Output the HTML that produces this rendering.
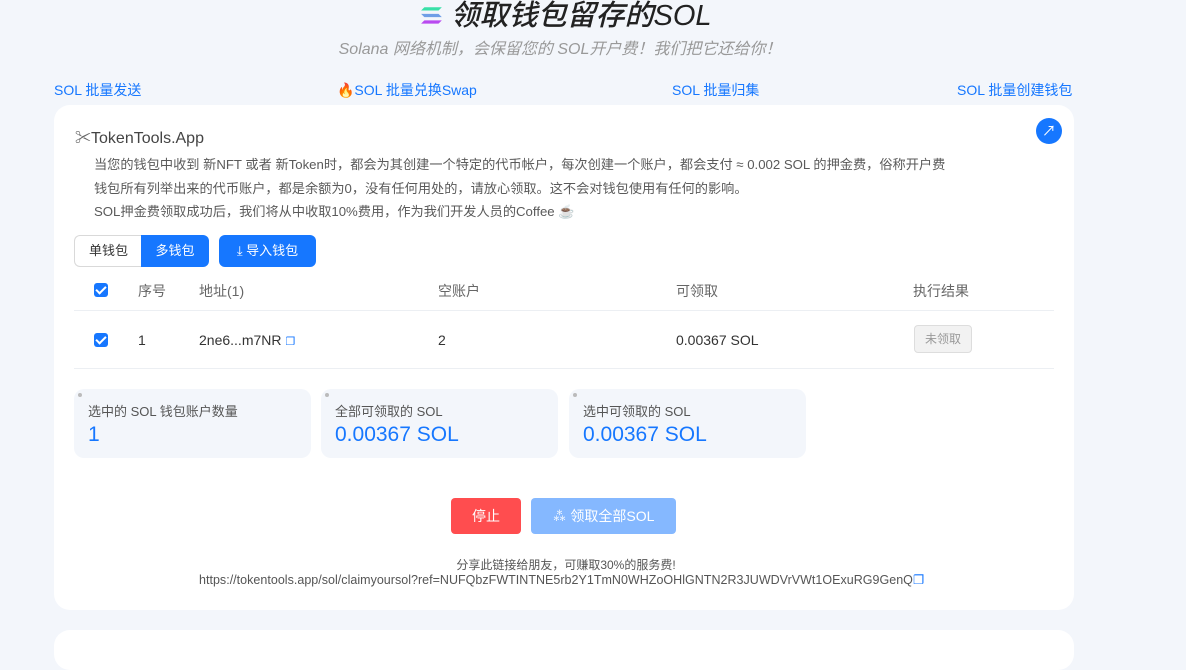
<!DOCTYPE html>
<html><head><meta charset="utf-8"><style>
*{box-sizing:border-box;margin:0;padding:0}
body{width:1186px;height:644px;overflow:hidden;background:#f3f6fb;font-family:"Liberation Sans","Noto Sans CJK SC",sans-serif;position:relative;color:#333}
.abs{position:absolute;white-space:nowrap}
.title{left:0;width:1132px;text-align:center;top:-8px;font-size:29px;font-weight:500;font-style:italic;color:#222}
.sub{left:0;width:1120px;text-align:center;top:35px;font-size:16px;font-style:italic;color:#999}
.link{top:80px;font-size:14px;color:#1677ff}
.card{left:54px;top:105px;width:1020px;height:505px;background:#fff;border-radius:16px}
.card2{left:54px;top:630px;width:1020px;height:40px;background:#fff;border-radius:16px}
.p{font-size:13.2px;color:#5a5a5a}
.cb{width:14px;height:14px;background:#1677ff;border-radius:3px}
.cb:after{content:"";position:absolute;left:4px;top:1px;width:4px;height:8px;border:solid #fff;border-width:0 2px 2px 0;transform:rotate(45deg)}
.th{top:281px;font-size:14px;color:#666}
.td{top:332px;font-size:14px;color:#333}
.stat{top:389px;width:237px;height:69px;background:#f3f6fb;border-radius:10px}
.stat .l{position:absolute;left:14px;top:12px;font-size:13px;color:#555}
.stat .v{position:absolute;left:14px;top:34px;font-size:21px;color:#1677ff}
.stat .d{position:absolute;left:4px;top:4px;width:4px;height:4px;border-radius:2px;background:#bbb}
</style></head><body>
<div class="abs title"><svg width="24" height="22" viewBox="0 0 22 20" style="vertical-align:-2px;margin-right:6px"><path d="M4 2h16l-3 3H1z" fill="#38e0a8"/><path d="M1 8h16l3 3H4z" fill="#6f9ee6"/><path d="M4 14h16l-3 3H1z" fill="#b94af0"/></svg>领取钱包留存的SOL</div>
<div class="abs sub">Solana 网络机制，会保留您的 SOL开户费！我们把它还给你！</div>
<div class="abs link" style="left:54px">SOL 批量发送</div>
<div class="abs link" style="left:337px">🔥SOL 批量兑换Swap</div>
<div class="abs link" style="left:672px">SOL 批量归集</div>
<div class="abs link" style="left:957px">SOL 批量创建钱包</div>
<div class="abs card"></div>
<div class="abs card2"></div>
<div class="abs" style="left:75px;top:124px;font-size:16px;color:#444"><span style="color:#666">✂</span>TokenTools.App</div>
<div class="abs" style="left:1036px;top:118px;width:26px;height:26px;border-radius:13px;background:#1677ff;color:#fff;font-size:14px;text-align:center;line-height:26px">↗</div>
<div class="abs p" style="left:94px;top:154px">当您的钱包中收到 新NFT 或者 新Token时，都会为其创建一个特定的代币帐户，每次创建一个账户，都会支付 ≈ 0.002 SOL 的押金费，俗称开户费</div>
<div class="abs p" style="left:94px;top:178px">钱包所有列举出来的代币账户，都是余额为0，没有任何用处的，请放心领取。这不会对钱包使用有任何的影响。</div>
<div class="abs p" style="left:94px;top:201px">SOL押金费领取成功后，我们将从中收取10%费用，作为我们开发人员的Coffee ☕</div>
<div class="abs" style="left:74px;top:235px;width:68px;height:32px;border:1px solid #d9d9d9;border-right:none;border-radius:6px 0 0 6px;font-size:13px;line-height:30px;text-align:center;color:#333">单钱包</div>
<div class="abs" style="left:141px;top:235px;width:68px;height:32px;background:#1677ff;border-radius:0 6px 6px 0;font-size:13px;line-height:32px;text-align:center;color:#fff">多钱包</div>
<div class="abs" style="left:219px;top:235px;width:97px;height:32px;background:#1677ff;border-radius:6px;font-size:13px;line-height:32px;text-align:center;color:#fff">⤓ 导入钱包</div>
<div class="abs cb" style="left:94px;top:283px"></div>
<div class="abs th" style="left:138px">序号</div>
<div class="abs th" style="left:199px">地址(1)</div>
<div class="abs th" style="left:438px">空账户</div>
<div class="abs th" style="left:676px">可领取</div>
<div class="abs th" style="left:913px">执行结果</div>
<div class="abs" style="left:74px;top:310px;width:980px;height:1px;background:#eceff3"></div>
<div class="abs cb" style="left:94px;top:333px"></div>
<div class="abs td" style="left:138px">1</div>
<div class="abs td" style="left:199px">2ne6...m7NR <span style="color:#1677ff;font-size:11px">❐</span></div>
<div class="abs td" style="left:438px">2</div>
<div class="abs td" style="left:676px">0.00367 SOL</div>
<div class="abs" style="left:914px;top:325px;width:58px;height:28px;background:#f2f2f2;border:1px solid #ddd;border-radius:4px;font-size:12px;color:#999;text-align:center;line-height:26px">未领取</div>
<div class="abs" style="left:74px;top:368px;width:980px;height:1px;background:#eceff3"></div>
<div class="abs stat" style="left:74px"><div class="d"></div><div class="l">选中的 SOL 钱包账户数量</div><div class="v">1</div></div>
<div class="abs stat" style="left:321px"><div class="d"></div><div class="l">全部可领取的 SOL</div><div class="v">0.00367 SOL</div></div>
<div class="abs stat" style="left:569px"><div class="d"></div><div class="l">选中可领取的 SOL</div><div class="v">0.00367 SOL</div></div>
<div class="abs" style="left:451px;top:498px;width:70px;height:36px;background:#ff4d4f;border-radius:4px;color:#fff;font-size:14px;text-align:center;line-height:36px">停止</div>
<div class="abs" style="left:531px;top:498px;width:145px;height:36px;background:#85b8ff;border-radius:4px;color:#fff;font-size:14px;text-align:center;line-height:36px">⁂ 领取全部SOL</div>
<div class="abs" style="left:0;width:1132px;text-align:center;top:556px;font-size:12px;color:#555">分享此链接给朋友，可赚取30%的服务费!</div>
<div class="abs" style="left:199px;top:572px;font-size:12.5px;color:#555;letter-spacing:0.02px">https://tokentools.app/sol/claimyoursol?ref=NUFQbzFWTINTNE5rb2Y1TmN0WHZoOHlGNTN2R3JUWDVrVWt1OExuRG9GenQ<span style="color:#1677ff">❐</span></div>
</body></html>
